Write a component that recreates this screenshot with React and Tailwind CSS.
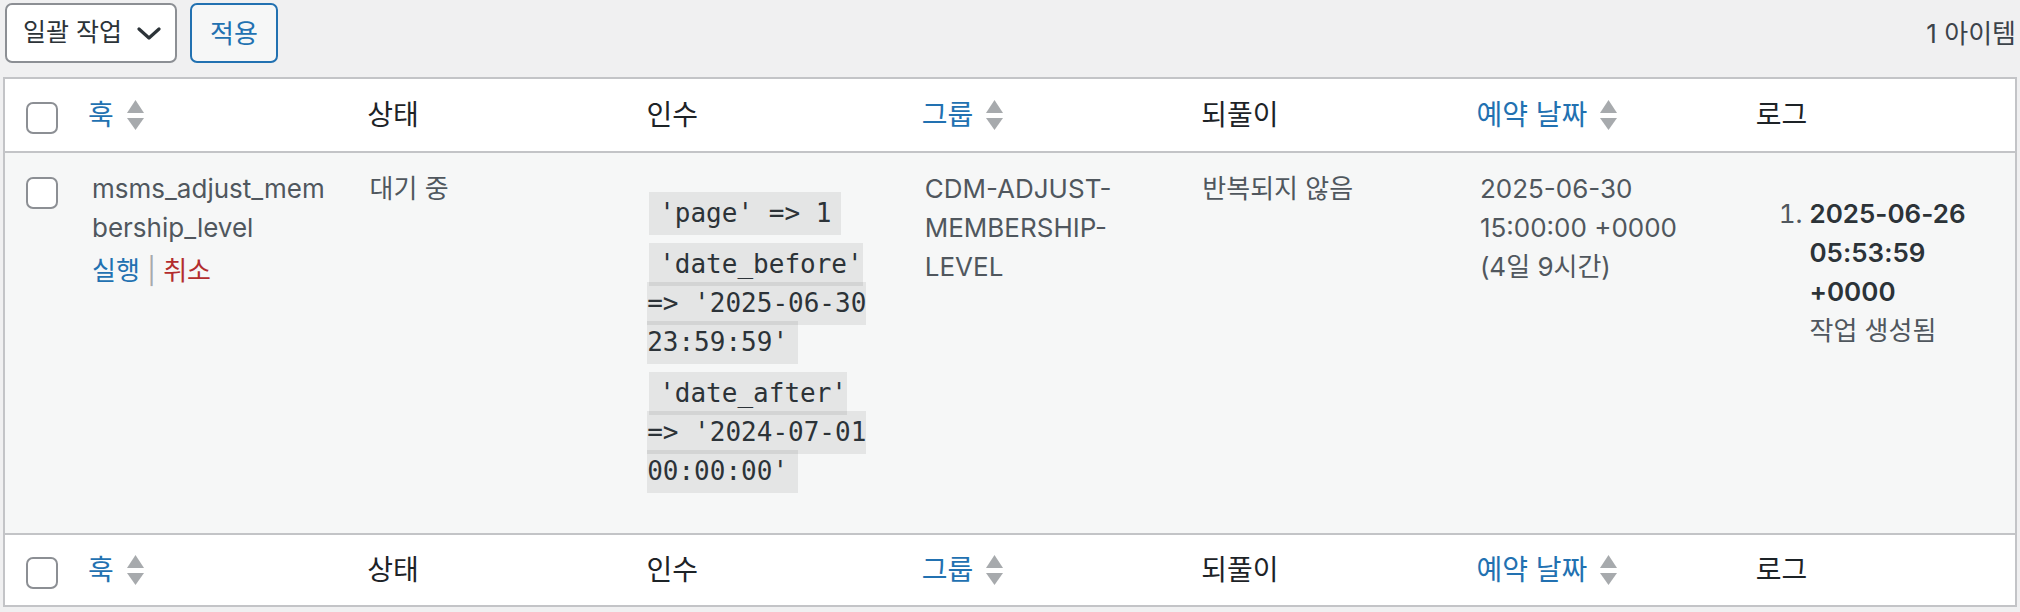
import React from 'react';

const sans = "font-['Inter','Noto_Sans_CJK_KR',sans-serif]";
const mono = "font-['DejaVu_Sans_Mono',monospace]";

function SortArrows() {
  return (
    <svg width="17" height="30" viewBox="0 0 17 30" className="shrink-0">
      <path d="M8.5 0 L17 13 L0 13 Z" fill="#a7aaad" />
      <path d="M0 18 L17 18 L8.5 30 Z" fill="#a7aaad" />
    </svg>
  );
}

function Checkbox() {
  return <span className="block w-[32px] h-[32px] rounded-[7px] border-2 border-[#8c8f94] bg-white" />;
}

const columns = [
  { label: '훅', sortable: true },
  { label: '상태' },
  { label: '인수' },
  { label: '그룹', sortable: true },
  { label: '되풀이' },
  { label: '예약 날짜', sortable: true },
  { label: '로그' },
];

function HeadRow({ height, cbTop }) {
  return (
    <div className={`flex ${height} bg-white`}>
      <div className={`w-[67px] shrink-0 pl-[21px] ${cbTop}`}>
        <Checkbox />
      </div>
      {columns.map((c) =>
        c.sortable ? (
          <div key={c.label} className="flex-1 flex items-center gap-[13px] pl-[16px] text-[28px] text-[#2271b1]">
            <span>{c.label}</span>
            <SortArrows />
          </div>
        ) : (
          <div key={c.label} className="flex-1 flex items-center pl-[20px] text-[28px] text-[#1d2327]">
            {c.label}
          </div>
        )
      )}
    </div>
  );
}

// one code value, already split into its wrapped lines
function CodeArg({ lines }) {
  return (
    <div className="flex flex-col items-start">
      {lines.map((l, i) => {
        const first = i === 0;
        const last = i === lines.length - 1;
        return (
          <span
            key={i}
            className={`block h-[43px] leading-[43px] whitespace-pre bg-black/[0.07] text-[#2c3338] ${mono} text-[26px] ${
              first ? 'ml-[2px] pl-[10px]' : '-mt-[4px]'
            } ${last ? 'pr-[10px]' : ''}`}
          >
            {l}
          </span>
        );
      })}
    </div>
  );
}

export default function App() {
  return (
    <div className={`w-[2020px] h-[612px] bg-[#f0f0f1] ${sans} overflow-hidden`}>
      {/* Top nav */}
      <div className="h-[77px] flex items-start pt-[3px] pl-[5px] pr-[4px]">
        <div className="flex items-center gap-[13px]">
          <div className="w-[172px] h-[60px] rounded-[7px] border-2 border-[#8c8f94] bg-white flex items-center pl-[16px] pr-[14px] justify-between text-[25px] text-[#2c3338]">
            <span>일괄 작업</span>
            <svg width="24" height="14" viewBox="0 0 24 14" className="mt-[2px]">
              <path d="M2 2 L12 11 L22 2" fill="none" stroke="#2c3338" strokeWidth="3.2" strokeLinecap="round" strokeLinejoin="round" />
            </svg>
          </div>
          <button className="w-[88px] h-[60px] rounded-[7px] border-2 border-[#2271b1] bg-[#f6f7f7] text-[#2271b1] text-[26px]">
            적용
          </button>
        </div>
        <div className="ml-auto h-[60px] flex items-center text-[26px] text-[#3c434a]">1 아이템</div>
      </div>

      {/* Table */}
      <div className="mx-[3px] w-[2014px] border-2 border-[#c3c4c7] bg-white">
        <HeadRow height="h-[72px]" cbTop="pt-[23px]" />

        <div className="flex h-[384px] border-y-2 border-[#c3c4c7] bg-[#f6f7f7] text-[26px] leading-[39px] text-[#50575e]">
          <div className="w-[67px] shrink-0 pl-[21px] pt-[24px]">
            <Checkbox />
          </div>
          <div className="flex-1 px-[20px] pt-[16px]">
            <div>msms_adjust_mem</div>
            <div>bership_level</div>
            <div className="mt-[4px]">
              <span className="text-[#2271b1]">실행</span>
              <span className="text-[#a7aaad]"> | </span>
              <span className="text-[#b32d2e]">취소</span>
            </div>
          </div>
          <div className="flex-1 px-[20px] pt-[16px]">대기 중</div>
          <div className="flex-1 px-[20px] pt-[39px] flex flex-col gap-[8px]">
            <CodeArg lines={["'page' => 1"]} />
            <CodeArg lines={["'date_before'", "=> '2025-06-30", "23:59:59'"]} />
            <CodeArg lines={["'date_after'", "=> '2024-07-01", "00:00:00'"]} />
          </div>
          <div className="flex-1 px-[20px] pt-[16px]">
            <div>CDM-ADJUST-</div>
            <div>MEMBERSHIP-</div>
            <div>LEVEL</div>
          </div>
          <div className="flex-1 px-[20px] pt-[16px]">반복되지 않음</div>
          <div className="flex-1 px-[20px] pt-[16px]">
            <div>2025-06-30</div>
            <div>15:00:00 +0000</div>
            <div>(4일 9시간)</div>
          </div>
          <div className="flex-1 px-[20px] pt-[41px]">
            <ol className="list-decimal pl-[52px]">
              <li>
                <strong className="font-semibold text-[#2c3338]">
                  2025-06-26
                  <br />
                  05:53:59
                  <br />
                  +0000
                </strong>
                <br />
                작업 생성됨
              </li>
            </ol>
          </div>
        </div>

        <HeadRow height="h-[70px]" cbTop="pt-[22px]" />
      </div>
    </div>
  );
}
